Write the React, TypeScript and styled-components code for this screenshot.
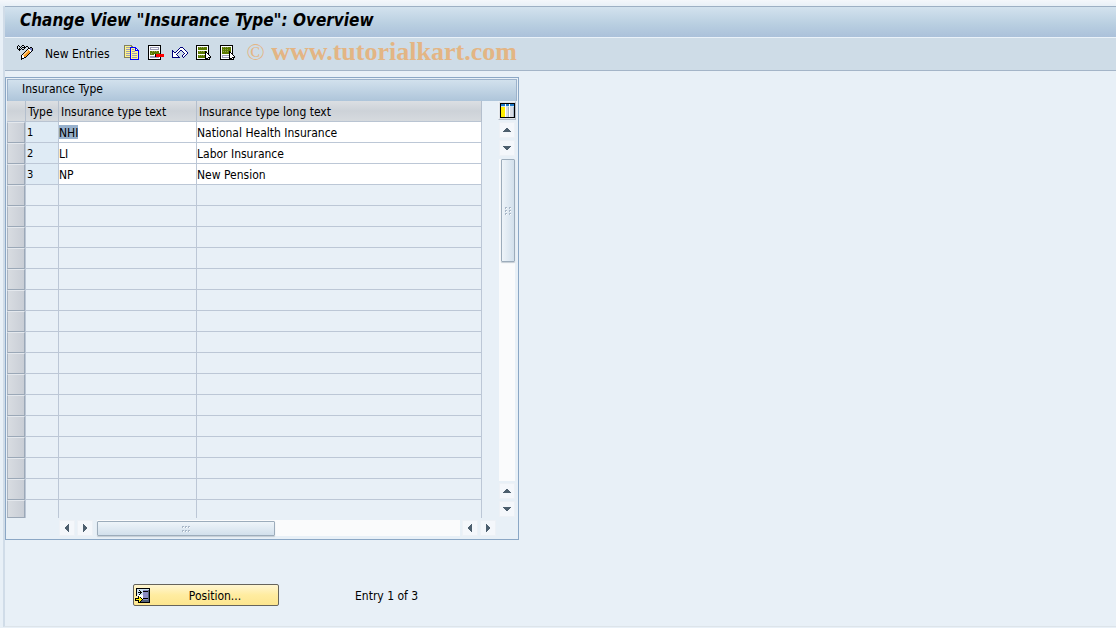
import React from "react";
import styled, { createGlobalStyle } from "styled-components";

const GlobalStyle = createGlobalStyle`
  *, *::before, *::after { box-sizing: border-box; }
  body {
    margin: 0;
    background: #e8f0f7;
    color: #000;
    font: 12px/16px "DejaVu Sans Condensed", "DejaVu Sans", sans-serif;
  }
  button, input { font: inherit; color: inherit; }
`;

const Page = styled.div`
  min-height: 100vh;
  display: flex;
  flex-direction: column;
  padding: 6px 0 1px 3px;
  background: linear-gradient(#f4f7fb, #e8f0f7 6px);
`;

const Frame = styled.div`
  flex: 1;
  display: flex;
  flex-direction: column;
  border-left: 2px solid #d0dce8;
  border-bottom: 1px solid #dde4ea;
`;

const TitleBar = styled.header`
  height: 32px;
  border-top: 1px solid #9db0c4;
  border-bottom: 1px solid #eaf2f9;
  background: linear-gradient(#d3e2ee, #b8cee0 60%, #abc1da);
  padding-left: 15px;
`;

const Title = styled.h1`
  margin: 0;
  font: italic bold 17px/26px "DejaVu Sans Condensed", "DejaVu Sans", sans-serif;
`;

const Toolbar = styled.div`
  display: flex;
  align-items: center;
  height: 33px;
  padding: 0 0 4px 8px;
  background: #cedce7;
  border-bottom: 1px solid #a4b5c8;
`;

const ToolButton = styled.button`
  display: flex;
  align-items: center;
  justify-content: center;
  min-width: 24px;
  height: 24px;
  padding: 0;
  border: 0;
  background: none;
`;

const TextToolButton = styled(ToolButton)`
  padding: 3px 10px 0 8px;
`;

const Watermark = styled.span`
  margin-left: 7px;
  font: bold 26px/28px "Liberation Serif", serif;
  color: #e3b584;
`;

const Mark = styled.span`
  font-size: 24px;
  font-weight: normal;
`;

const Content = styled.main`
  padding: 6px 0 16px;
`;

const Panel = styled.section`
  width: 514px;
  max-width: 100%;
  border: 1px solid #8ba7c5;
  padding: 1px;
`;

const PanelTitle = styled.h2`
  margin: 0;
  height: 22px;
  padding-left: 14px;
  border: 1px solid #9cb2cb;
  border-bottom: 0;
  background: linear-gradient(#d2e1ed, #aec5da);
  font: inherit;
  line-height: 18px;
`;

const PanelBody = styled.div`
  display: flex;
  justify-content: space-between;
  padding-right: 1px;
`;

const Grid = styled.table`
  width: 475px;
  border-collapse: separate;
  border-spacing: 0;
  table-layout: fixed;
`;

const Col = styled.col<{ $w?: number }>`
  width: ${(p) => (p.$w ? `${p.$w}px` : "auto")};
`;

const HeadCell = styled.th`
  height: 21px;
  padding: 2px 0 0 2px;
  text-align: left;
  font-weight: normal;
  line-height: 18px;
  white-space: nowrap;
  background: linear-gradient(#dcdfe3, #cdd2d8 50%, #d6dade);
  border-right: 1px solid #b4bfcd;
  border-bottom: 1px solid #b9c4d2;
`;

const Cell = styled.td<{ $tone: "key" | "edit" | "empty" }>`
  height: 21px;
  padding: 0;
  line-height: 16px;
  background: ${(p) => ({ key: "#dfebf5", edit: "#fff", empty: "#e8f0f7" })[p.$tone]};
  border-right: 1px solid #bcc7d6;
  border-bottom: 1px solid #bcc7d6;
  tr:last-child > & { height: 18px; border-bottom: 0; }
`;

const KeyText = styled.span`
  padding-left: 1px;
  font-size: 11px;
`;

const Field = styled.input<{ $marked?: boolean }>`
  display: block;
  width: ${(p) => (p.$marked ? "auto" : "100%")};
  field-sizing: ${(p) => (p.$marked ? "content" : "fixed")};
  height: 14px;
  padding: 2px 0 0;
  border: 0;
  background: ${(p) => (p.$marked ? "#98b1cd" : "transparent")};
`;

const SelectorCell = styled.td`
  height: 21px;
  padding: 0;
  border-right: 1px solid #bcc7d6;
  tr:last-child > & { height: 18px; }
`;

const RowSelector = styled.button`
  display: block;
  width: 100%;
  height: 21px;
  padding: 0;
  border: 1px solid #9ba8b7;
  border-top-color: #e4e8ed;
  border-left-color: #aab4c1;
  background: linear-gradient(90deg, #d8dce1, #c9ced6);
  tr:last-child > td > & { height: 18px; }
`;

const SideBar = styled.div`
  width: 18px;
  display: flex;
  flex-direction: column;
  align-items: center;
  gap: 2px;
  padding-bottom: 1px;
`;

const ConfigButton = styled.button`
  width: 18px;
  height: 19px;
  padding: 0 0 0 1px;
  display: flex;
  align-items: center;
  border: 1px solid #b4bdc9;
  border-top-color: #eef2f6;
  border-left-color: #eef2f6;
  background: #dde2e8;
`;

const ArrowButton = styled.button`
  flex: none;
  display: flex;
  align-items: center;
  justify-content: center;
  width: 16px;
  height: 16px;
  padding: 0;
  border: 1px solid #edf1f6;
  background: #f4f7fb;
`;

const Track = styled.div<{ $horizontal?: boolean }>`
  flex: 1;
  display: flex;
  background: #fafbfc;
  ${(p) => (p.$horizontal ? "height: 16px; margin-left: 2px;" : "width: 16px; margin-top: 1px;")}
`;

const Thumb = styled.div<{ $horizontal?: boolean }>`
  display: flex;
  align-items: center;
  justify-content: center;
  border: 1px solid #9cacbb;
  border-radius: 1px;
  box-shadow: 0 1px 1px #c4ccd4;
  background: linear-gradient(${(p) => (p.$horizontal ? "180deg" : "90deg")}, #eef4f9, #d2e0ec);
  ${(p) => (p.$horizontal ? "width: 49%; height: 15px; margin-top: 1px;" : "width: 14px; height: 32%; margin-left: 2px;")}
`;

const BottomBar = styled.div`
  display: flex;
  gap: 2px;
  padding: 2px 21px 2px 52px;
`;

const Footer = styled.div`
  display: flex;
  align-items: center;
  padding: 44px 0 0 128px;
`;

const PositionButton = styled.button`
  display: flex;
  align-items: center;
  width: 146px;
  height: 22px;
  padding: 0 0 0 1px;
  border: 1px solid #66645c;
  border-radius: 2px;
  background: linear-gradient(#fff6d2, #ffeca0 50%, #fde68f);
`;

const ButtonLabel = styled.span`
  flex: 1;
  padding: 2px 0 0 2px;
`;

const Status = styled.p`
  margin: 0 0 0 76px;
  padding-top: 2px;
`;

const palette: Record<string, string> = {
  k: "#000000",
  w: "#ffffff",
  y: "#ffee00",
  o: "#f59a23",
  f: "#ffd08a",
  g: "#5c7a00",
  h: "#8ca050",
  s: "#9c9cb8",
  r: "#ff0000",
  n: "#00007b",
  b: "#0000ff",
  l: "#fff58a",
  c: "#1c78c8",
  d: "#d8dce4",
  p: "#8c8cc6",
  e: "#52617a",
  t: "#4d5f6e",
  a: "#a9b8c8",
  q: "#cde2f2",
  m: "#808060",
  v: "#7a86c8",
};

function PixelIcon({ rows }: { rows: string[] }) {
  const width = Math.max(...rows.map((r) => r.length));
  return (
    <svg width={width} height={rows.length} shapeRendering="crispEdges" aria-hidden="true">
      {rows.flatMap((row, y) =>
        [...row].map((ch, x) =>
          palette[ch] ? <rect key={`${x}-${y}`} x={x} y={y} width="1" height="1" fill={palette[ch]} /> : null
        )
      )}
    </svg>
  );
}

const icons = {
  change: [
    ".k...kk.........",
    "k.k.k..k.kk.....",
    "k..k.kkkk..k.kk.",
    "k.k.k..k...kkvvk",
    ".kkk.kk...kwwvvk",
    "..k......kfowwvk",
    "........kffoowk.",
    ".......kffoook..",
    "......kffoook...",
    ".....kffoook....",
    "....kwfoook.....",
    "....kwwook......",
    "....kwwkk.......",
    "....kkk.........",
    "....k...........",
  ],
  copy: [
    "mmmmmmmm.......",
    "mllllllmm......",
    "mlssssbbbbbb...",
    "mlllllbllllbb..",
    "mlssssblsslbwb.",
    "mlllllbllllbbbb",
    "mlssssblssslllb",
    "mlllllblllllllb",
    "mlssssblssssslb",
    "mlllllblllllllb",
    "mlssssblssssslb",
    "mlllllblllllllb",
    "mmmmmmblssssslb",
    "......blllllllb",
    "......bbbbbbbbb",
  ],
  remove: [
    "kkkkkkkkkkkkk...",
    "kwwwwwwwwwwwk...",
    "kwssssssssswk...",
    "kwswwwwwwwswk...",
    "kwssssssssswk...",
    "kwwwwwwwwwwwk...",
    "kwgghghghggwk...",
    "kwgggggggggwk...",
    "kwghggggggggk...",
    "kwggggwkrrrrrrrr",
    "kwwwwwwkrrrrrrrr",
    "kwssssskrrrrrrrr",
    "kwssssssssswk...",
    "kwwwwwwwwwwwk...",
    "kkkkkkkkkkkkk...",
  ],
  undo: [
    "........nnn.....",
    ".......nwwwn....",
    "......nwwwwwn...",
    "n....nwwnnwwwn..",
    "nn..nwwn..nwwwn.",
    "nwnnwwn....nwwwn",
    "nwwwwn......nwwn",
    "nwwwn......nwwn.",
    "nwwwwn....nwwn..",
    "nwwwwwn...nwn...",
    "nnnnnnnn...n....",
  ],
  selectAll: [
    "kkkkkkkkkkkkk...",
    "kwwwwwwwwwwwk...",
    "kwghghghgggwk...",
    "kwgggggggggwk...",
    "kwgggggggggwk...",
    "kwwwwwwwwwwwk...",
    "kwghghghgkgwk...",
    "kwgggggggkkwk...",
    "kwgggggggkwkk...",
    "kwwwwwwwwkwwk...",
    "kwghghghgkwwwk..",
    "kwgggggggkwwwwk.",
    "kwgggggggkwwkkk.",
    "kwwwwwwwwkkkwk..",
    "kkkkkkkkkkkkkk..",
  ],
  selectBlock: [
    "kkkkkkkkkkkkk...",
    "kwwwwwwwwwwwk...",
    "kwghghghgggwk...",
    "kwgggggggggwk...",
    "kwghghghgggwk...",
    "kwgggggggggwk...",
    "kwghghghgkgwk...",
    "kwgggggggkkwk...",
    "kwgggggggkwkk...",
    "kwwwwwwwwkwwk...",
    "kwssssssskwwwk..",
    "kwswwwwwwkwwwwk.",
    "kwssssssskwwkkk.",
    "kwwwwwwwwkkkwk..",
    "kkkkkkkkkkkkkk..",
  ],
  config: [
    "kkkkkkkkkkkkkkk",
    "kccccwcccwcccck",
    "kccccwcccwcccck",
    "kqqqqwqqqwqqqqk",
    "kyyyywddawdddak",
    "kyyyywddawdddak",
    "kyyyywddawdddak",
    "kyyyywddawdddak",
    "kyyyywddawdddak",
    "kyyyywddawdddak",
    "kyyyywddawdddak",
    "kyyyywddawdddak",
    "kyyyywddawdddak",
    "kyyyywddawdddak",
    "kkkkkkkkkkkkkkk",
  ],
  position: [
    ".kkkkkkkkkkkkkk",
    ".kqqqqqqqqqqqqk",
    ".kqqkqqqpppppek",
    ".kqqqkqqkkkkkek",
    ".kqkkkkqpppppek",
    ".kqqqkqqpppppek",
    ".kqqkqqqpppppek",
    ".kwwwwwwpppppek",
    "...kwwwwpppppek",
    "...kykwwpppppek",
    "kkkkyykwkkkkkek",
    "kyyyyyykpppppek",
    "kkkkyykeeeeeeek",
    "...kykeeeeeeeek",
    "...kkkkkkkkkkkk",
  ],
  up: ["...tt...", "..tttt..", ".tttttt.", "tttttttt"],
  down: ["tttttttt", ".tttttt.", "..tttt..", "...tt..."],
  left: ["...t", "..tt", ".ttt", "tttt", "tttt", ".ttt", "..tt", "...t"],
  right: ["t...", "tt..", "ttt.", "tttt", "tttt", "ttt.", "tt..", "t..."],
  gripV: ["aa..aa", "aw..aw", "......", "aa..aa", "aw..aw", "......", "aa..aa", "aw..aw"],
  gripH: ["aa.aa.aa", "aw.aw.aw", "........", "........", "aa.aa.aa", "aw.aw.aw"],
};

const entries = [
  { type: "1", text: "NHI", long: "National Health Insurance" },
  { type: "2", text: "LI", long: "Labor Insurance" },
  { type: "3", text: "NP", long: "New Pension" },
];
const emptyRows = Array.from({ length: 16 }, (_, i) => entries.length + i + 1);

function Arrow({ direction, label }: { direction: "up" | "down" | "left" | "right"; label: string }) {
  return (
    <ArrowButton type="button" aria-label={label}>
      <PixelIcon rows={icons[direction]} />
    </ArrowButton>
  );
}

function InsuranceTable() {
  return (
    <Grid>
      <colgroup>
        <Col $w={19} />
        <Col $w={33} />
        <Col $w={138} />
        <Col />
      </colgroup>
      <thead>
        <tr>
          <HeadCell aria-label="Row selection" />
          <HeadCell scope="col">Type</HeadCell>
          <HeadCell scope="col">Insurance type text</HeadCell>
          <HeadCell scope="col">Insurance type long text</HeadCell>
        </tr>
      </thead>
      <tbody>
        {entries.map((entry, i) => (
          <tr key={entry.type}>
            <SelectorCell>
              <RowSelector type="button" aria-label={`Select row ${entry.type}`} />
            </SelectorCell>
            <Cell $tone="key">
              <KeyText>{entry.type}</KeyText>
            </Cell>
            <Cell $tone="edit">
              <Field $marked={i === 0} defaultValue={entry.text} aria-label={`Insurance type text ${entry.type}`} />
            </Cell>
            <Cell $tone="edit">
              <Field defaultValue={entry.long} aria-label={`Insurance type long text ${entry.type}`} />
            </Cell>
          </tr>
        ))}
        {emptyRows.map((row) => (
          <tr key={row}>
            <SelectorCell>
              <RowSelector type="button" aria-label={`Select row ${row}`} />
            </SelectorCell>
            <Cell $tone="empty" />
            <Cell $tone="empty" />
            <Cell $tone="empty" />
          </tr>
        ))}
      </tbody>
    </Grid>
  );
}

export default function App() {
  return (
    <Page>
      <GlobalStyle />
      <Frame>
        <TitleBar>
          <Title>Change View "Insurance Type": Overview</Title>
        </TitleBar>
        <Toolbar>
          <ToolButton type="button" aria-label="Display or change"><PixelIcon rows={icons.change} /></ToolButton>
          <TextToolButton type="button">New Entries</TextToolButton>
          <ToolButton type="button" aria-label="Copy"><PixelIcon rows={icons.copy} /></ToolButton>
          <ToolButton type="button" aria-label="Delete"><PixelIcon rows={icons.remove} /></ToolButton>
          <ToolButton type="button" aria-label="Undo"><PixelIcon rows={icons.undo} /></ToolButton>
          <ToolButton type="button" aria-label="Select all"><PixelIcon rows={icons.selectAll} /></ToolButton>
          <ToolButton type="button" aria-label="Select block"><PixelIcon rows={icons.selectBlock} /></ToolButton>
          <Watermark><Mark>©</Mark> www.tutorialkart.com</Watermark>
        </Toolbar>
        <Content>
          <Panel>
            <PanelTitle>Insurance Type</PanelTitle>
            <PanelBody>
              <InsuranceTable />
              <SideBar>
                <ConfigButton type="button" aria-label="Table settings"><PixelIcon rows={icons.config} /></ConfigButton>
                <Arrow direction="up" label="Page up" />
                <Arrow direction="down" label="Line down" />
                <Track>
                  <Thumb><PixelIcon rows={icons.gripV} /></Thumb>
                </Track>
                <Arrow direction="up" label="Line up" />
                <Arrow direction="down" label="Page down" />
              </SideBar>
            </PanelBody>
            <BottomBar>
              <Arrow direction="left" label="First column" />
              <Arrow direction="right" label="Next column" />
              <Track $horizontal>
                <Thumb $horizontal><PixelIcon rows={icons.gripH} /></Thumb>
              </Track>
              <Arrow direction="left" label="Previous column" />
              <Arrow direction="right" label="Last column" />
            </BottomBar>
          </Panel>
          <Footer>
            <PositionButton type="button">
              <PixelIcon rows={icons.position} />
              <ButtonLabel>Position...</ButtonLabel>
            </PositionButton>
            <Status>Entry 1 of 3</Status>
          </Footer>
        </Content>
      </Frame>
    </Page>
  );
}
